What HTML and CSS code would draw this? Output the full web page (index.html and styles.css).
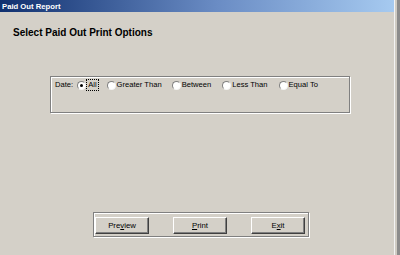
FILE: index.html
```html
<!DOCTYPE html>
<html>
<head>
<meta charset="utf-8">
<link rel="stylesheet" href="styles.css">
</head>
<body>
<div class="screen">
  <div class="window">
    <div class="titlebar">Paid Out Report</div>
    <div class="content">
      <h1 class="heading">Select Paid Out Print Options</h1>
      <div class="group date-group">
        <span class="field-label">Date:</span>
        <span class="opt opt-all"><span class="radio checked"></span><span class="focus">All</span></span>
        <span class="opt opt-gt"><span class="radio"></span><span class="text">Greater Than</span></span>
        <span class="opt opt-bt"><span class="radio"></span><span class="text">Between</span></span>
        <span class="opt opt-lt"><span class="radio"></span><span class="text">Less Than</span></span>
        <span class="opt opt-eq"><span class="radio"></span><span class="text">Equal To</span></span>
      </div>
      <div class="group button-group">
        <button class="btn">Pre<u>v</u>iew</button>
        <button class="btn"><u>P</u>rint</button>
        <button class="btn">E<u>x</u>it</button>
      </div>
    </div>
  </div>
  <div class="frame-right"></div>
</div>
</body>
</html>
```
FILE: styles.css
```css
html, body {
  margin: 0;
  padding: 0;
  background: #d4d0c8;
}
.screen {
  display: flex;
  width: 400px;
  height: 255px;
  overflow: hidden;
  font-family: "Liberation Sans", Arial, sans-serif;
  color: #000;
}
.window {
  width: 394px;
  display: flex;
  flex-direction: column;
}
.titlebar {
  height: 12px;
  line-height: 13px;
  padding-left: 2px;
  font-size: 7.7px;
  font-weight: bold;
  color: #fff;
  background: linear-gradient(to right, #10306f, #6a8cc4 55%, #a6caf0);
}
.content {
  padding-left: 13px;
  display: flex;
  flex-direction: column;
  align-items: flex-start;
}
.heading {
  margin: 15px 0 0 0;
  font-size: 10px;
  line-height: 12px;
  font-weight: bold;
}
.group {
  box-sizing: border-box;
  border: 1px solid #808080;
  box-shadow: inset 1px 1px 0 #fff, 1px 1px 0 #fff;
}
.date-group {
  margin: 37px 0 0 37px;
  width: 300px;
  height: 37px;
  padding: 3px 0 0 4px;
  display: flex;
  align-items: flex-start;
  font-size: 7.6px;
  line-height: 10px;
}
.field-label {
  margin-right: 4px;
}
.opt {
  display: flex;
  align-items: center;
}
.radio {
  position: relative;
  box-sizing: border-box;
  width: 9px;
  height: 9px;
  border-radius: 50%;
  background: #fff;
  border: 1px solid;
  border-color: #808080 #f4f4f4 #f4f4f4 #808080;
  margin-right: 1px;
}
.radio.checked::after {
  content: "";
  position: absolute;
  left: 2px;
  top: 2px;
  width: 3px;
  height: 3px;
  border-radius: 50%;
  background: #000;
}
.focus {
  outline: 1px dotted #000;
  outline-offset: 0;
  padding: 0 1px;
  line-height: 10px;
}
.text {
  margin-left: 0;
}
.opt-gt { margin-left: 9px; }
.opt-bt { margin-left: 10px; }
.opt-lt { margin-left: 11px; }
.opt-eq { margin-left: 11px; }
.button-group {
  margin: 99px 0 0 80px;
  width: 216px;
  height: 25px;
  padding: 4px 0 0 1px;
  display: flex;
  gap: 24px;
  align-items: flex-start;
}
.btn {
  box-sizing: border-box;
  width: 54px;
  height: 17px;
  padding: 0;
  margin: 0;
  background: #d4d0c8;
  border: 1px solid;
  border-color: #fff #404040 #404040 #fff;
  box-shadow: inset -1px -1px 0 #808080;
  font-family: "Liberation Sans", Arial, sans-serif;
  font-size: 7.8px;
  line-height: 14px;
  color: #000;
}
.frame-right {
  width: 6px;
  height: 255px;
  background: linear-gradient(to right, #f4f4f4 0, #f4f4f4 1px, #cfcbc3 1px, #cfcbc3 3px, #8c8c8c 3px);
}
```
